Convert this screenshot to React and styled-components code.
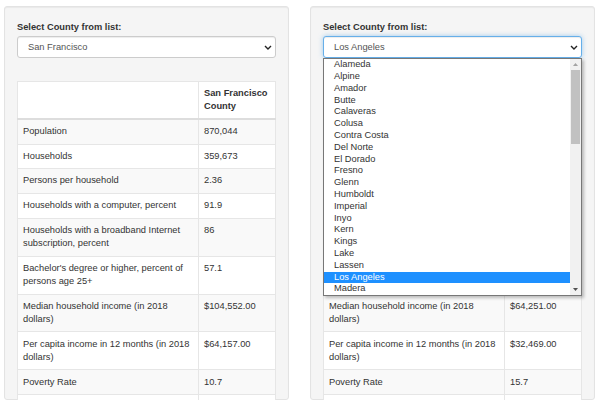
import styled, { createGlobalStyle } from "styled-components";

const GlobalStyle = createGlobalStyle`
  html, body {
    margin: 0;
    padding: 0;
    background: #fff;
    font-family: "Liberation Sans", Arial, Helvetica, sans-serif;
    color: #333;
    overflow: hidden;
  }
`;

const ROWS = [
  "Population",
  "Households",
  "Persons per household",
  "Households with a computer, percent",
  "Households with a broadband Internet subscription, percent",
  "Bachelor's degree or higher, percent of persons age 25+",
  "Median household income (in 2018 dollars)",
  "Per capita income in 12 months (in 2018 dollars)",
  "Poverty Rate",
  "Unemployment Rate",
];

const COUNTIES = [
  {
    name: "San Francisco",
    values: ["870,044", "359,673", "2.36", "91.9", "86", "57.1", "$104,552.00", "$64,157.00", "10.7", "2.9"],
  },
  {
    name: "Los Angeles",
    open: true,
    values: ["10,105,518", "3,306,109", "2.99", "87.1", "79.2", "31.8", "$64,251.00", "$32,469.00", "15.7", "4.7"],
  },
];

const OPTIONS = [
  "Alameda", "Alpine", "Amador", "Butte", "Calaveras", "Colusa", "Contra Costa",
  "Del Norte", "El Dorado", "Fresno", "Glenn", "Humboldt", "Imperial", "Inyo",
  "Kern", "Kings", "Lake", "Lassen", "Los Angeles", "Madera",
];

const Chevron = () => (
  <svg width="8" height="5" viewBox="0 0 8 5">
    <path d="M1 1 L4 4 L7 1" fill="none" stroke="#222" strokeWidth="1.4" />
  </svg>
);

const Arrow = ({ up }) => (
  <svg width="5" height="3" viewBox="0 0 5 3">
    <path d={up ? "M0 3 L2.5 0 L5 3 Z" : "M0 0 L2.5 3 L5 0 Z"} fill={up ? "#a3a3a3" : "#505050"} />
  </svg>
);

const CountyPanel = ({ county }) => (
  <Well>
    <Label>Select County from list:</Label>
    <SelectWrap>
      <SelectBox $focused={county.open}>
        <span>{county.name}</span>
        <Chevron />
      </SelectBox>
      {county.open && (
        <Dropdown>
          <OptionList>
            {OPTIONS.map((o) => (
              <Option key={o} $selected={o === county.name}>{o}</Option>
            ))}
          </OptionList>
          <Scrollbar>
            <ScrollButton><Arrow up /></ScrollButton>
            <Thumb />
            <Spacer />
            <ScrollButton><Arrow /></ScrollButton>
          </Scrollbar>
        </Dropdown>
      )}
    </SelectWrap>
    <Table>
      <colgroup>
        <col style={{ width: "181px" }} />
        <col />
      </colgroup>
      <thead>
        <tr>
          <Th />
          <Th>{county.name} County</Th>
        </tr>
      </thead>
      <tbody>
        {ROWS.map((r, i) => (
          <Tr key={r}>
            <Td>{r}</Td>
            <Td>{county.values[i]}</Td>
          </Tr>
        ))}
      </tbody>
    </Table>
  </Well>
);

const App = () => (
  <>
    <GlobalStyle />
    <Page>
      {COUNTIES.map((c) => (
        <CountyPanel key={c.name} county={c} />
      ))}
    </Page>
  </>
);

const Page = styled.div`
  display: flex;
  gap: 21px;
  padding: 6px 0 0 4px;
  height: 400px;
  box-sizing: border-box;
`;

const Well = styled.div`
  width: 285px;
  box-sizing: border-box;
  background: #f5f5f5;
  border: 1px solid #e3e3e3;
  border-radius: 3px;
  padding: 14px 12px 0 12px;
  box-shadow: inset 0 1px 1px rgba(0, 0, 0, 0.05);
`;

const Label = styled.div`
  font-size: 9.3px;
  font-weight: bold;
  line-height: 13.3px;
  margin-bottom: 2px;
  color: #333;
`;

const SelectWrap = styled.div`
  position: relative;
`;

const SelectBox = styled.div`
  height: 22px;
  box-sizing: border-box;
  display: flex;
  align-items: center;
  justify-content: space-between;
  padding: 0 3px 0 10px;
  background: #fff;
  border: 1px solid ${(p) => (p.$focused ? "#66afe9" : "#ccc")};
  border-radius: 3px;
  font-size: 9.3px;
  color: #555;
  box-shadow: ${(p) =>
    p.$focused
      ? "inset 0 1px 1px rgba(0,0,0,.075), 0 0 5px rgba(102,175,233,.6)"
      : "inset 0 1px 1px rgba(0,0,0,.075)"};
`;

const Dropdown = styled.div`
  position: absolute;
  top: 100%;
  left: 0;
  right: 0;
  height: 238px;
  box-sizing: border-box;
  display: flex;
  background: #fff;
  border: 1px solid #777;
  box-shadow: 2px 2px 3px rgba(0, 0, 0, 0.25);
  z-index: 5;
`;

const OptionList = styled.div`
  flex: 1;
  display: flex;
  flex-direction: column;
`;

const Option = styled.div`
  height: 11.8px;
  line-height: 11.8px;
  font-size: 9.3px;
  padding-left: 10px;
  color: ${(p) => (p.$selected ? "#fff" : "#333")};
  background: ${(p) => (p.$selected ? "#1e90ff" : "transparent")};
`;

const Scrollbar = styled.div`
  width: 11px;
  display: flex;
  flex-direction: column;
  background: #f1f1f1;
`;

const ScrollButton = styled.div`
  height: 11px;
  display: flex;
  align-items: center;
  justify-content: center;
`;

const Thumb = styled.div`
  height: 74px;
  margin: 0 1px;
  background: #c1c1c1;
`;

const Spacer = styled.div`
  flex: 1;
`;

const Table = styled.table`
  width: 100%;
  margin-top: 23px;
  border-collapse: collapse;
  table-layout: fixed;
  background: #fff;
  font-size: 9.3px;
  line-height: 13.3px;
  color: #333;
`;

const Th = styled.th`
  text-align: left;
  vertical-align: bottom;
  font-weight: bold;
  padding: 4.5px 5px;
  border: 1px solid #e6e6e6;
  border-bottom: 2px solid #ddd;
`;

const Tr = styled.tr`
  &:nth-of-type(odd) {
    background: #f9f9f9;
  }
`;

const Td = styled.td`
  vertical-align: top;
  padding: 5.2px 5px 5.2px;
  border: 1px solid #e6e6e6;
`;

export default App;
